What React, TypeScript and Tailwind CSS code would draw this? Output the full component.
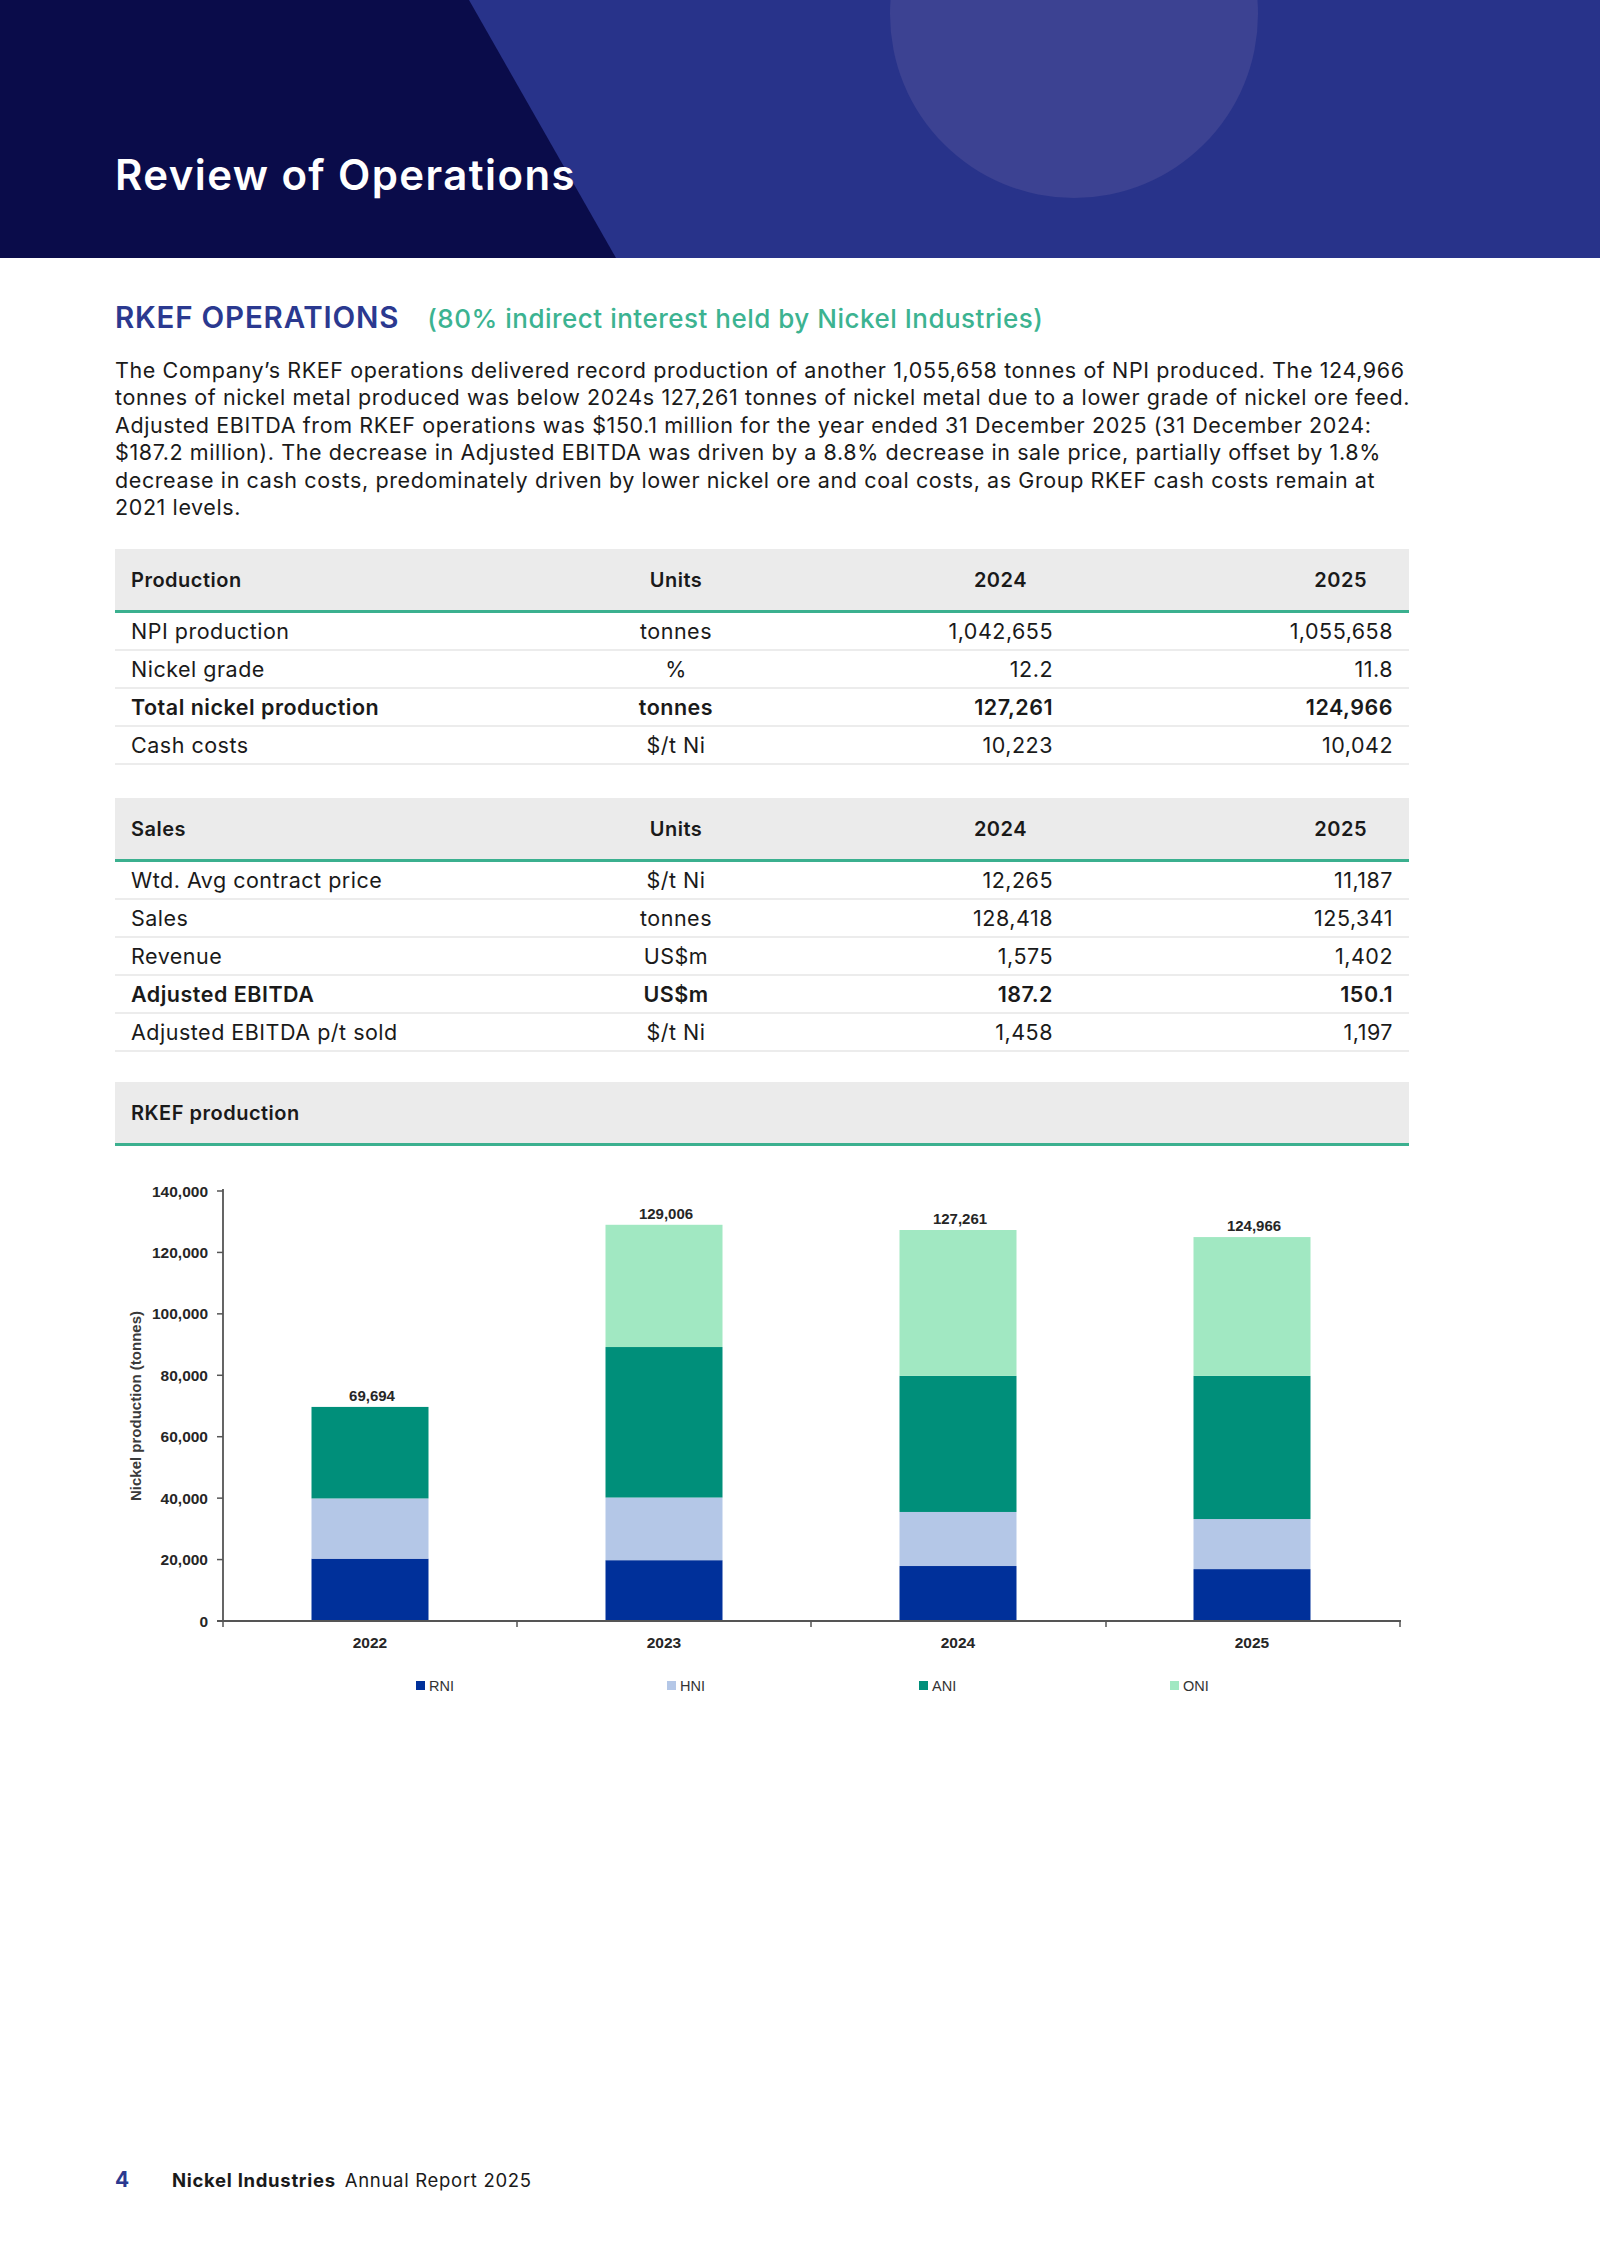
import React from 'react';

type Row = { label: string; unit: string; y24: string; y25: string; bold?: boolean };

const PRODUCTION: Row[] = [
  { label: 'NPI production', unit: 'tonnes', y24: '1,042,655', y25: '1,055,658' },
  { label: 'Nickel grade', unit: '%', y24: '12.2', y25: '11.8' },
  { label: 'Total nickel production', unit: 'tonnes', y24: '127,261', y25: '124,966', bold: true },
  { label: 'Cash costs', unit: '$/t Ni', y24: '10,223', y25: '10,042' },
];

const SALES: Row[] = [
  { label: 'Wtd. Avg contract price', unit: '$/t Ni', y24: '12,265', y25: '11,187' },
  { label: 'Sales', unit: 'tonnes', y24: '128,418', y25: '125,341' },
  { label: 'Revenue', unit: 'US$m', y24: '1,575', y25: '1,402' },
  { label: 'Adjusted EBITDA', unit: 'US$m', y24: '187.2', y25: '150.1', bold: true },
  { label: 'Adjusted EBITDA p/t sold', unit: '$/t Ni', y24: '1,458', y25: '1,197' },
];

// stacked values in thousands of tonnes: RNI, HNI, ANI, ONI
const BARS = [
  { year: '2022', total: '69,694', parts: [20.3, 19.6, 29.8, 0] },
  { year: '2023', total: '129,006', parts: [19.8, 20.4, 49.0, 39.8] },
  { year: '2024', total: '127,261', parts: [17.9, 17.6, 44.3, 47.5] },
  { year: '2025', total: '124,966', parts: [16.9, 16.3, 46.6, 45.2] },
];

const SERIES = [
  { name: 'RNI', color: '#00309a' },
  { name: 'HNI', color: '#b4c7e7' },
  { name: 'ANI', color: '#008f7a' },
  { name: 'ONI', color: '#a1e8c2' },
];

const COLS = 'grid grid-cols-[436px_250px_268px_340px] items-center';

const DataTable: React.FC<{ title: string; rows: Row[] }> = ({ title, rows }) => (
  <div className="w-full text-[#1a1a1a]">
    <div className={`${COLS} h-[64px] bg-[#ebebeb] border-b-[3px] border-[#3bb08f] text-[20px] tracking-[0.5px] font-semibold`}>
      <div className="pl-4">{title}</div>
      <div className="text-center">Units</div>
      <div className="text-right pr-[42px]">2024</div>
      <div className="text-right pr-[42px]">2025</div>
    </div>
    {rows.map((r) => (
      <div
        key={r.label}
        className={`${COLS} h-[38px] border-b-2 border-[#ececec] text-[21.5px] tracking-[0.5px] ${r.bold ? 'font-semibold' : 'font-normal'}`}
      >
        <div className="pl-4">{r.label}</div>
        <div className="text-center">{r.unit}</div>
        <div className="text-right pr-4">{r.y24}</div>
        <div className="text-right pr-4">{r.y25}</div>
      </div>
    ))}
  </div>
);

const Chart: React.FC = () => {
  const x0 = 223;
  const y0 = 1621;
  const k = 430 / 140;
  const ticks = [0, 20, 40, 60, 80, 100, 120, 140];
  const centers = [370, 664, 958, 1252];
  const legendX = [416, 667, 919, 1170];

  return (
    <svg width="1294" height="570" viewBox="115 1146 1294 570" className="block">
      <g fontFamily="'Liberation Sans', Arial, sans-serif">
        <text
          x="137"
          y="1406"
          transform="rotate(-90 137 1406)"
          textAnchor="middle"
          dominantBaseline="middle"
          fontSize="15"
          fontWeight="700"
          fill="#3a3a3a"
        >
          Nickel production (tonnes)
        </text>
        {ticks.map((t) => {
          const y = y0 - t * k;
          return (
            <g key={t}>
              <line x1={x0 - 6} x2={x0} y1={y} y2={y} stroke="#555" strokeWidth="1.5" />
              <text x="208" y={y + 5.5} textAnchor="end" fontSize="15.5" fontWeight="700" fill="#262626">
                {t === 0 ? '0' : `${t},000`}
              </text>
            </g>
          );
        })}
        {BARS.map((b, i) => {
          let acc = 0;
          const cx = centers[i];
          const top = y0 - b.parts.reduce((s, v) => s + v, 0) * k;
          return (
            <g key={b.year}>
              {b.parts.map((v, j) => {
                const h = v * k;
                const y = y0 - (acc + v) * k;
                acc += v;
                return v > 0 ? (
                  <rect key={j} x={cx - 58.5} y={y} width="117" height={h} fill={SERIES[j].color} />
                ) : null;
              })}
              <text x={cx + 2} y={top - 6} textAnchor="middle" fontSize="15" fontWeight="700" fill="#262626">
                {b.total}
              </text>
              <text x={cx} y="1648" textAnchor="middle" fontSize="15.5" fontWeight="700" fill="#262626">
                {b.year}
              </text>
            </g>
          );
        })}
        <line x1={x0} x2={x0} y1="1189" y2={y0 + 1} stroke="#555" strokeWidth="1.8" />
        <line x1={x0 - 6} x2="1401" y1={y0} y2={y0} stroke="#555" strokeWidth="2" />
        {[223, 517, 811, 1106, 1400].map((x) => (
          <line key={x} x1={x} x2={x} y1={y0} y2={y0 + 6} stroke="#555" strokeWidth="1.5" />
        ))}
        {SERIES.map((s, i) => (
          <g key={s.name}>
            <rect x={legendX[i]} y="1681" width="9" height="9" fill={s.color} />
            <text x={legendX[i] + 13} y="1691" fontSize="14.5" fill="#333">
              {s.name}
            </text>
          </g>
        ))}
      </g>
    </svg>
  );
};

const App: React.FC = () => {
  return (
    <div className="w-[1600px] min-h-[2263px] bg-white flex flex-col font-['Inter','Liberation_Sans',sans-serif] text-[#1a1a1a]">
      {/* Banner */}
      <header className="relative h-[258px] w-full overflow-hidden bg-[#0a0c4a]">
        <svg className="absolute inset-0" width="1600" height="258" viewBox="0 0 1600 258">
          <polygon points="469,0 1600,0 1600,258 616,258" fill="#28338a" />
          <circle cx="1074" cy="14" r="184" fill="#3c4292" />
        </svg>
        <h1 className="relative pl-[115px] pt-[154px] text-[42px] leading-[42px] font-semibold text-white tracking-[1.4px]">
          Review of Operations
        </h1>
      </header>

      <main className="pl-[115px] pr-[191px] w-full">
        <h2 className="mt-[42px] flex items-baseline leading-[34px]">
          <span className="text-[29.5px] font-semibold tracking-[0.8px] text-[#2b3990]">RKEF OPERATIONS</span>
          <span className="ml-[28px] text-[26px] font-medium tracking-[0.5px] text-[#3cb391]">
            (80% indirect interest held by Nickel Industries)
          </span>
        </h2>

        <p className="mt-[21px] text-[21.5px] tracking-[0.6px] leading-[27.4px] whitespace-nowrap">
          The Company’s RKEF operations delivered record production of another 1,055,658 tonnes of NPI produced. The 124,966
          <br />
          tonnes of nickel metal produced was below 2024s 127,261 tonnes of nickel metal due to a lower grade of nickel ore feed.
          <br />
          Adjusted EBITDA from RKEF operations was $150.1 million for the year ended 31 December 2025 (31 December 2024:
          <br />
          $187.2 million). The decrease in Adjusted EBITDA was driven by a 8.8% decrease in sale price, partially offset by 1.8%
          <br />
          decrease in cash costs, predominately driven by lower nickel ore and coal costs, as Group RKEF cash costs remain at
          <br />
          2021 levels.
        </p>

        <div className="mt-[28px]">
          <DataTable title="Production" rows={PRODUCTION} />
        </div>

        <div className="mt-[33px]">
          <DataTable title="Sales" rows={SALES} />
        </div>

        <div className="mt-[30px] h-[64px] flex items-center bg-[#ebebeb] border-b-[3px] border-[#3bb08f] pl-4 text-[20px] tracking-[0.5px] font-semibold">
          RKEF production
        </div>

        <Chart />
      </main>

      {/* Footer */}
      <footer className="mt-auto mb-[71px] px-[115px] flex items-center text-[18.5px] leading-[24px] tracking-[0.7px]">
        <span className="w-[57px] text-[21px] font-bold text-[#2b3990]">4</span>
        <span className="font-bold">Nickel Industries</span>
        <span className="ml-[9px]">Annual Report 2025</span>
      </footer>
    </div>
  );
};

export default App;
